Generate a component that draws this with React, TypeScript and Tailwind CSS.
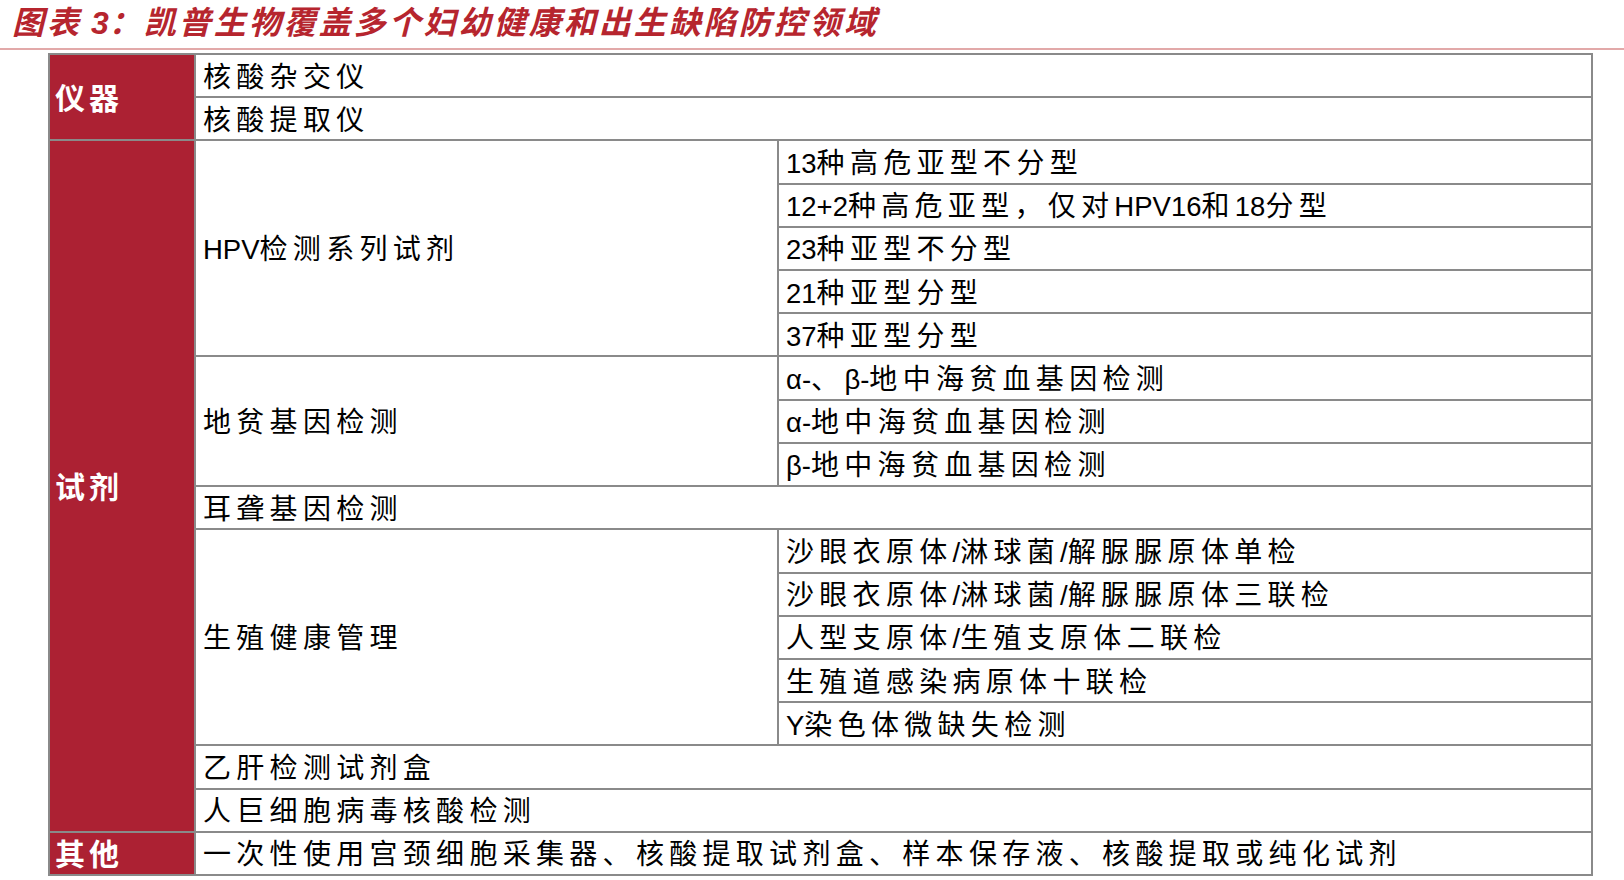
import React from 'react';

const CJK_RE = /([\u3000-\u303f\u4e00-\u9fff\uff00-\uffef]+)/;

// split text into CJK / latin runs so only the CJK gets the wide spacing
function Spaced({ text, cjk, latin = '' }: { text: string; cjk: string; latin?: string }) {
  const parts = text.split(CJK_RE).filter(Boolean);
  return (
    <>
      {parts.map((p, i) =>
        CJK_RE.test(p) ? (
          <span key={i} className={cjk}>
            {p}
          </span>
        ) : (
          <span key={i} className={latin}>
            {p}
          </span>
        ),
      )}
    </>
  );
}

const CELLS = [
  { pos: 'row-[1/2] col-[2/4]', text: '核酸杂交仪' },
  { pos: 'row-[2/3] col-[2/4]', text: '核酸提取仪' },
  { pos: 'row-[3/8] col-[2/3]', text: 'HPV检测系列试剂' },
  { pos: 'row-[3/4] col-[3/4]', text: '13种高危亚型不分型' },
  { pos: 'row-[4/5] col-[3/4]', text: '12+2种高危亚型，仅对HPV16和18分型' },
  { pos: 'row-[5/6] col-[3/4]', text: '23种亚型不分型' },
  { pos: 'row-[6/7] col-[3/4]', text: '21种亚型分型' },
  { pos: 'row-[7/8] col-[3/4]', text: '37种亚型分型' },
  { pos: 'row-[8/11] col-[2/3]', text: '地贫基因检测' },
  { pos: 'row-[8/9] col-[3/4]', text: 'α-、β-地中海贫血基因检测' },
  { pos: 'row-[9/10] col-[3/4]', text: 'α-地中海贫血基因检测' },
  { pos: 'row-[10/11] col-[3/4]', text: 'β-地中海贫血基因检测' },
  { pos: 'row-[11/12] col-[2/4]', text: '耳聋基因检测' },
  { pos: 'row-[12/17] col-[2/3]', text: '生殖健康管理' },
  { pos: 'row-[12/13] col-[3/4]', text: '沙眼衣原体/淋球菌/解脲脲原体单检' },
  { pos: 'row-[13/14] col-[3/4]', text: '沙眼衣原体/淋球菌/解脲脲原体三联检' },
  { pos: 'row-[14/15] col-[3/4]', text: '人型支原体/生殖支原体二联检' },
  { pos: 'row-[15/16] col-[3/4]', text: '生殖道感染病原体十联检' },
  { pos: 'row-[16/17] col-[3/4]', text: 'Y染色体微缺失检测' },
  { pos: 'row-[17/18] col-[2/4]', text: '乙肝检测试剂盒' },
  { pos: 'row-[18/19] col-[2/4]', text: '人巨细胞病毒核酸检测' },
  { pos: 'row-[19/20] col-[2/4]', text: '一次性使用宫颈细胞采集器、核酸提取试剂盒、样本保存液、核酸提取或纯化试剂' },
];

const GROUPS = [
  { pos: 'row-[1/3] col-[1/2]', text: '仪器' },
  { pos: 'row-[3/19] col-[1/2]', text: '试剂' },
  { pos: 'row-[19/20] col-[1/2]', text: '其他' },
];

export default function App() {
  return (
    <div className="w-[1624px] h-[880px] bg-white font-['Liberation_Sans','Noto_Sans_CJK_SC',sans-serif] overflow-hidden">
      {/* Title */}
      <div className="h-[50px] flex items-center pl-[12px] pb-[2px] border-b-2 border-[#e2a9a9]">
        <h1 className="text-[32px] font-bold italic text-[#b6252e] leading-none">
          <Spaced text="图表 3：凯普生物覆盖多个妇幼健康和出生缺陷防控领域" cjk="tracking-[3px]" />
        </h1>
      </div>

      {/* Table */}
      <div className="ml-[48px] mt-[3px] w-[1545px] h-[823px] bg-[#8a8a8a] p-[2px] grid gap-[2px] grid-cols-[144px_581px_812px] grid-rows-[repeat(19,minmax(0,1fr))]">
        {GROUPS.map((g) => (
          <div key={g.text} className={`${g.pos} bg-[#ac2133] flex items-center pl-[5px] pt-[3px]`}>
            <span className="text-white text-[30px] font-bold leading-none">
              <Spaced text={g.text} cjk="tracking-[4px]" />
            </span>
          </div>
        ))}
        {CELLS.map((c) => (
          <div key={c.text} className={`${c.pos} bg-white flex items-center pl-[7px] pt-[4px]`}>
            <span className="text-black text-[28px] leading-none whitespace-nowrap">
              <Spaced text={c.text} cjk="tracking-[5.3px]" latin="text-[27.5px]" />
            </span>
          </div>
        ))}
      </div>
    </div>
  );
}
